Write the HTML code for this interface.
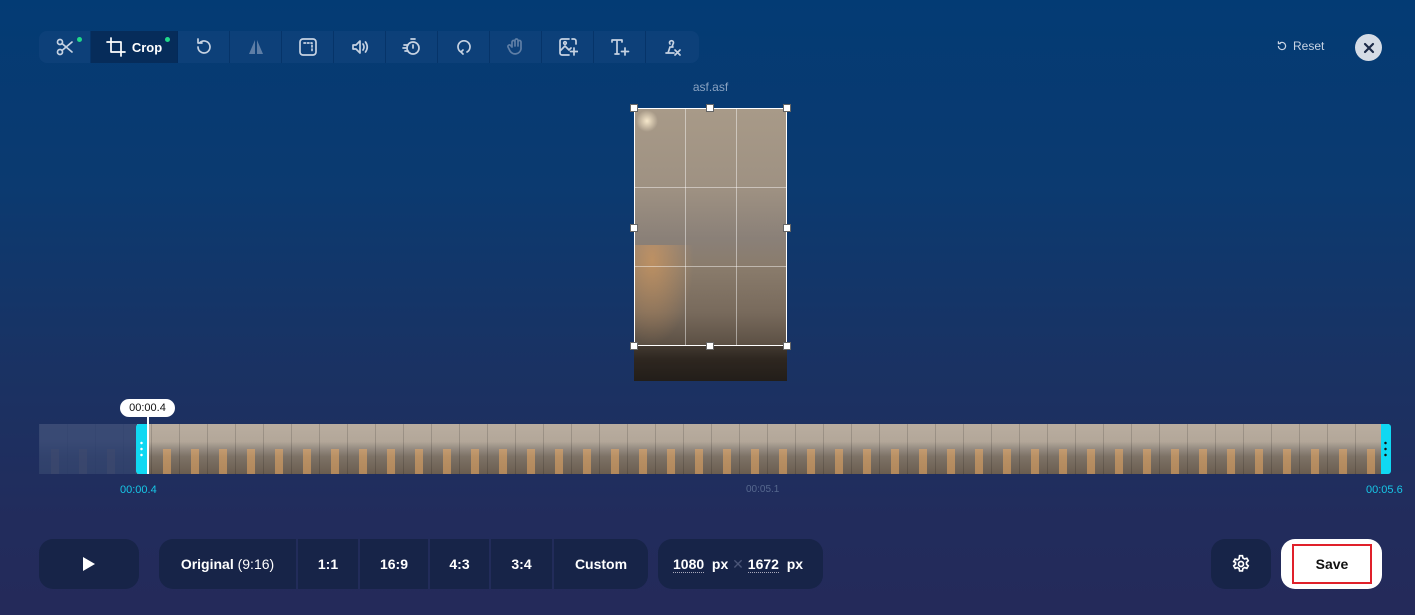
<!DOCTYPE html>
<html><head><meta charset="utf-8"><style>
*{margin:0;padding:0;box-sizing:border-box}
body{width:1415px;height:615px;overflow:hidden;font-family:"Liberation Sans",Arial,sans-serif;background:linear-gradient(180deg,#033b74 0%,#0b3a70 30%,#1a3263 60%,#222c5c 85%,#242a5a 100%);position:relative;color:#fff}
.abs{position:absolute}
.tb{left:39px;top:31px;width:660px;height:32px;background:rgba(20,70,125,.55);border-radius:8px;display:flex}
.ti{width:52px;height:32px;display:flex;align-items:center;justify-content:center;border-right:1px solid rgba(0,40,90,.5)}
.ti svg{width:20px;height:20px;fill:none;stroke:#c6d2e2;stroke-width:1.7;stroke-linecap:round;stroke-linejoin:round}
.dot{position:absolute;width:5px;height:5px;border-radius:50%;background:#1fd98a}
.btn{background:#172448;border-radius:14px;height:50px;top:539px}
.seg{display:flex;align-items:center;justify-content:center;height:50px;font-weight:bold;font-size:14px;border-right:2px solid #222c5a}
.h{position:absolute;width:8px;height:8px;background:#fff;border:1px solid #666}
.frames{background:linear-gradient(180deg,#b9ada0 0%,#b3a799 35%,#948a80 50%,#7d7266 65%,#6a5d50 100%);}
</style></head><body>
<div class="abs tb">
 <div class="ti" style="position:relative"><svg viewBox="0 0 20 20"><circle cx="5" cy="5" r="2.5"/><circle cx="5" cy="15" r="2.5"/><path d="M7 6.5L17 15M7 13.5L17 5"/></svg><span class="dot" style="left:38px;top:6px"></span></div>
 <div class="ti" style="width:87px;background:#062c5a;position:relative;gap:6px"><svg viewBox="0 0 20 20" style="stroke:#fff"><path d="M5 1v14h14M1 5h14v14"/></svg><b style="font-size:13px;color:#fff">Crop</b><span class="dot" style="left:74px;top:6px"></span></div>
 <div class="ti"><svg viewBox="0 0 20 20"><path d="M4 10a6 6 0 1 0 2-4.5M4 2v4h4"/></svg></div>
 <div class="ti"><svg viewBox="0 0 20 20" style="fill:#5e7ea6;stroke:none"><path d="M9 3L3 17h6zM11 3l6 14h-6z"/></svg></div>
 <div class="ti"><svg viewBox="0 0 20 20"><rect x="2" y="2" width="16" height="16" rx="3"/><path d="M6 6h8v8" stroke-dasharray="1.5 2"/></svg></div>
 <div class="ti"><svg viewBox="0 0 20 20"><path d="M3 8h3l4-4v12l-4-4H3zM13 7q2 3 0 6M15.5 5q3.5 5 0 10"/></svg></div>
 <div class="ti"><svg viewBox="0 0 20 20"><circle cx="11" cy="11" r="6"/><path d="M9 2h4M11 8v3M2 8h4M1 11h3M3 14h3"/></svg></div>
 <div class="ti"><svg viewBox="0 0 20 20"><path d="M7 15a6 6 0 1 1 6 0M9 13l-2 2 2 2"/></svg></div>
 <div class="ti"><svg viewBox="0 0 20 20" style="stroke:#5e7ea6"><path d="M6 10V5a1.5 1.5 0 0 1 3 0v4V3.5a1.5 1.5 0 0 1 3 0V9V5a1.5 1.5 0 0 1 3 0v7a6 6 0 0 1-11 2l-2-4a1.5 1.5 0 0 1 3-1z"/></svg></div>
 <div class="ti"><svg viewBox="0 0 20 20"><path d="M11 2H4a2 2 0 0 0-2 2v12a2 2 0 0 0 2 2h7M2 14l5-5 4 4 2-2M16 11v7M12.5 14.5h7M14 2h2a2 2 0 0 1 2 2v3"/><circle cx="7" cy="6" r="1.3"/></svg></div>
 <div class="ti"><svg viewBox="0 0 20 20"><path d="M2 3h10M7 3v14M5 17h4M15 11v7M11.5 14.5h7M2 3v2M12 3v2"/></svg></div>
 <div class="ti" style="border:none"><svg viewBox="0 0 20 20"><path d="M4 16h8M6 16l2-6M9 10h2M8 7a2 2 0 1 1 3 0l-1 3M13 13l5 5M18 13l-5 5"/></svg></div>
</div>
<div class="abs" style="left:1276px;top:39px;font-size:12px;color:#c9d4e3;display:flex;align-items:center;gap:5px"><svg width="12" height="12" viewBox="0 0 20 20" fill="none" stroke="#c9d4e3" stroke-width="2"><path d="M4 10a6 6 0 1 0 2-4.5M4 2v4h4"/></svg>Reset</div>
<div class="abs" style="left:1355px;top:34px;width:27px;height:27px;border-radius:50%;background:#d5dce6;display:flex;align-items:center;justify-content:center"><svg width="12" height="12" viewBox="0 0 12 12" stroke="#1b2a48" stroke-width="2.2" stroke-linecap="round"><path d="M2 2l8 8M10 2l-8 8"/></svg></div>
<div class="abs" style="left:634px;top:80px;width:153px;text-align:center;font-size:12px;color:#8aa3c2">asf.asf</div>
<div class="abs" style="left:634px;top:108px;width:153px;height:273px;background:linear-gradient(180deg,#a89a88 0%,#9e9182 30%,#8a8078 48%,#8a7c6c 58%,#786a5c 75%,#5e5246 86%,#3e342b 92%,#2e2822 100%)"></div>
<div class="abs" style="left:634px;top:245px;width:60px;height:100px;background:radial-gradient(ellipse at 30% 15%,rgba(230,160,90,.55),transparent 70%)"></div>
<div class="abs" style="left:636px;top:110px;width:22px;height:22px;border-radius:50%;background:radial-gradient(circle,rgba(255,240,210,.9),transparent 70%)"></div>
<div class="abs" style="left:634px;top:346px;width:153px;height:35px;background:rgba(0,0,0,.25)"></div>
<div class="abs" style="left:634px;top:108px;width:153px;height:238px;border:1.5px solid #fff">
 <div class="abs" style="left:50px;top:0;width:1px;height:100%;background:rgba(255,255,255,.45)"></div>
 <div class="abs" style="left:101px;top:0;width:1px;height:100%;background:rgba(255,255,255,.45)"></div>
 <div class="abs" style="top:78px;left:0;height:1px;width:100%;background:rgba(255,255,255,.45)"></div>
 <div class="abs" style="top:157px;left:0;height:1px;width:100%;background:rgba(255,255,255,.45)"></div>
</div>
<div class="h" style="left:630px;top:104px"></div><div class="h" style="left:706px;top:104px"></div><div class="h" style="left:783px;top:104px"></div>
<div class="h" style="left:630px;top:224px"></div><div class="h" style="left:783px;top:224px"></div>
<div class="h" style="left:630px;top:342px"></div><div class="h" style="left:706px;top:342px"></div><div class="h" style="left:783px;top:342px"></div>
<!-- timeline -->
<div class="abs frames" style="left:39px;top:424px;width:1350px;height:50px"></div>
<div class="abs" style="left:39px;top:449px;width:1350px;height:25px;background:repeating-linear-gradient(90deg,transparent 0 12px,rgba(235,170,100,.55) 12px 20px,transparent 20px 28px)"></div>
<div class="abs" style="left:39px;top:424px;width:1350px;height:50px;background:repeating-linear-gradient(90deg,rgba(0,0,0,.15) 0 1px,transparent 1px 28px)"></div>
<div class="abs" style="left:39px;top:424px;width:98px;height:50px;background:rgba(40,60,110,.88)"></div>
<div class="abs" style="left:136px;top:424px;width:11px;height:50px;background:#10d8f2;border-radius:3px 0 0 3px"></div>
<div class="abs" style="left:147px;top:416px;width:2px;height:58px;background:#fff"></div>
<div class="abs" style="left:140px;top:440px;width:3px;height:18px;background:radial-gradient(circle,#fff 1px,transparent 1.5px) 0 0/3px 6px"></div>
<div class="abs" style="left:1381px;top:424px;width:10px;height:50px;background:#10d8f2;border-radius:0 3px 3px 0"></div>
<div class="abs" style="left:1384px;top:440px;width:3px;height:18px;background:radial-gradient(circle,#111 1px,transparent 1.5px) 0 0/3px 6px"></div>
<div class="abs" style="left:120px;top:399px;width:55px;height:18px;background:#fff;border-radius:9px;color:#111;font-size:11px;text-align:center;line-height:18px">00:00.4</div>
<div class="abs" style="left:120px;top:484px;font-size:11px;color:#17c6e6">00:00.4</div>
<div class="abs" style="left:746px;top:484px;font-size:10px;color:#56688e">00:05.1</div>
<div class="abs" style="left:1366px;top:484px;font-size:11px;color:#17c6e6">00:05.6</div>
<!-- bottom -->
<div class="abs btn" style="left:39px;width:100px;display:flex;align-items:center;justify-content:center"><svg width="14" height="16" viewBox="0 0 14 16"><path d="M1 1l12 7-12 7z" fill="#fff"/></svg></div>
<div class="abs btn" style="left:159px;width:489px;display:flex;overflow:hidden">
 <div class="seg" style="width:139px">Original&nbsp;<span style="font-weight:normal">(9:16)</span></div>
 <div class="seg" style="width:62px">1:1</div>
 <div class="seg" style="width:70px">16:9</div>
 <div class="seg" style="width:61px">4:3</div>
 <div class="seg" style="width:63px">3:4</div>
 <div class="seg" style="width:94px;border:none">Custom</div>
</div>
<div class="abs btn" style="left:658px;width:165px;display:flex;align-items:center;padding-left:15px;font-weight:bold;font-size:14px">
 <span style="border-bottom:1px dotted #aab">1080</span>&nbsp;&nbsp;px&nbsp;<span style="color:#4a5577;font-weight:normal">✕</span>&nbsp;<span style="border-bottom:1px dotted #aab">1672</span>&nbsp;&nbsp;px
</div>
<div class="abs btn" style="left:1211px;width:60px;display:flex;align-items:center;justify-content:center"><svg width="20" height="20" viewBox="0 0 24 24" fill="none" stroke="#fff" stroke-width="2"><circle cx="12" cy="12" r="3"/><path d="M10.3 2h3.4l.6 2.8 2 1.2 2.7-.9 1.7 3-2.1 1.9v2.3l2.1 1.9-1.7 3-2.7-.9-2 1.2-.6 2.8h-3.4l-.6-2.8-2-1.2-2.7.9-1.7-3 2.1-1.9v-2.3L3.3 9.1l1.7-3 2.7.9 2-1.2z"/></svg></div>
<div class="abs btn" style="left:1281px;width:101px;background:#fff"></div>
<div class="abs" style="left:1292px;top:544px;width:80px;height:40px;border:2px solid #e0202a;color:#111;font-weight:bold;font-size:14px;display:flex;align-items:center;justify-content:center">Save</div>
</body></html>
